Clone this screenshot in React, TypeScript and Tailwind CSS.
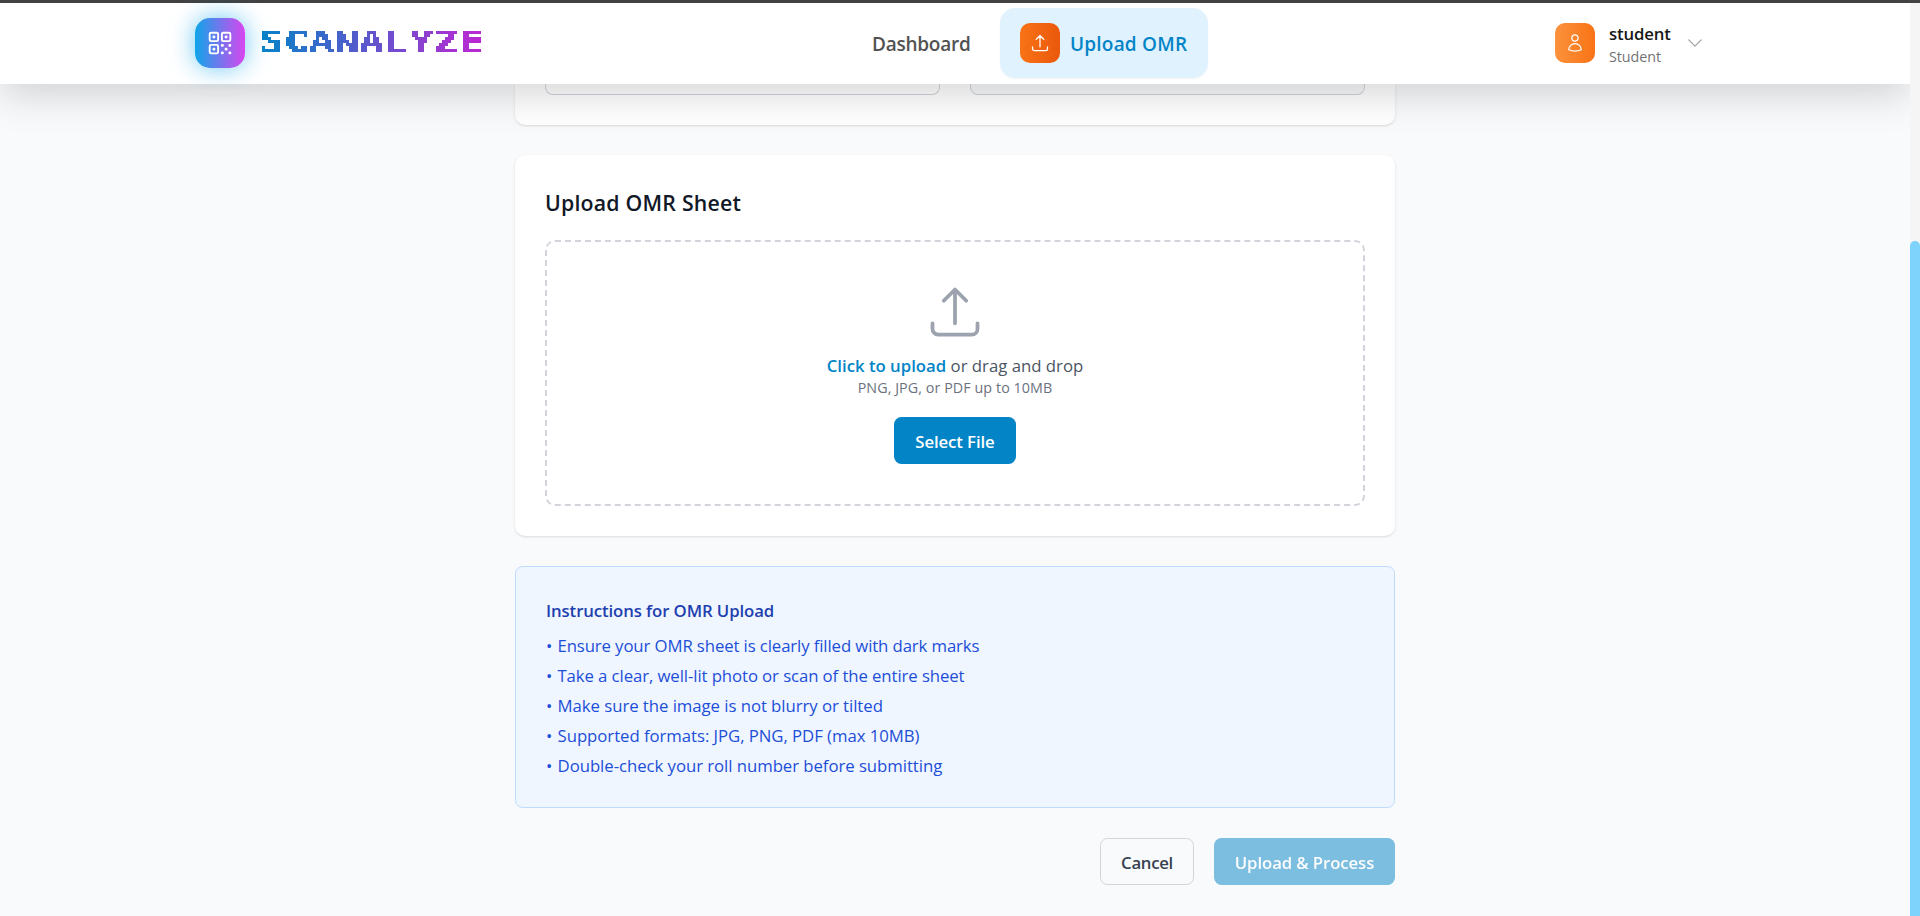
import React from 'react';
import {
  HiOutlineArrowUpTray,
  HiOutlineChevronDown,
  HiOutlineQrCode,
  HiOutlineUser,
} from 'react-icons/hi2';

const instructions = [
  { text: 'Ensure your OMR sheet is clearly filled with dark marks', tracking: 'tracking-[-0.11px]' },
  { text: 'Take a clear, well-lit photo or scan of the entire sheet', tracking: 'tracking-[-0.09px]' },
  { text: 'Make sure the image is not blurry or tilted', tracking: 'tracking-[-0.05px]' },
  { text: 'Supported formats: JPG, PNG, PDF (max 10MB)', tracking: 'tracking-[-0.05px]' },
  { text: 'Double-check your roll number before submitting', tracking: 'tracking-[-0.05px]' },
];

/* Mosaic filter that gives the brand name its 8-bit look. */
function PixelFilter() {
  return (
    <svg width="0" height="0" className="absolute" aria-hidden="true">
      <filter id="pixelate" x="0" y="0" width="100%" height="100%" colorInterpolationFilters="sRGB">
        <feFlood x="1" y="1" width="1" height="1" />
        <feComposite x="0" y="0" width="3" height="3" />
        <feTile result="grid" />
        <feComposite in="SourceGraphic" in2="grid" operator="in" />
        <feComponentTransfer>
          <feFuncA type="discrete" tableValues="0 1 1" />
        </feComponentTransfer>
        <feMorphology operator="dilate" radius="1" />
      </filter>
    </svg>
  );
}

function Header() {
  return (
    <header className="relative z-10 flex h-[84px] shrink-0 border-t-[3px] border-[#454545] pr-[10px]">
      <div className="flex w-full items-center bg-white pb-px pl-[195px] shadow-[0_10px_40px_rgba(0,0,0,0.17)]">
        <div className="flex w-[678px] items-center gap-[14px]">
          <div className="flex size-[50px] items-center justify-center rounded-[15px] bg-[linear-gradient(to_right,#0ea5e9,#d946ef)] shadow-[0_0_25px_rgba(14,165,233,0.6)]">
            <HiOutlineQrCode className="size-[30px] text-white" />
          </div>
          <div className="mb-[3px] w-[240px] [filter:url(#pixelate)]">
            <span className="block w-[166px] origin-left scale-x-[1.36] bg-[linear-gradient(to_right,#0284c7,#c026d3)] bg-clip-text font-['DejaVu_Sans_Mono',monospace] text-[30.5px] leading-[40px] font-bold text-transparent">
              SCANALYZE
            </span>
          </div>
        </div>
        <nav className="flex w-[682px] items-center">
          <a className="-ml-px w-[128px] pt-[2px] text-[19px] font-semibold tracking-[-0.25px] text-[#525252]">Dashboard</a>
          <a className="flex h-[70px] w-[208px] items-center gap-[10px] rounded-[15px] bg-[#e0f2fe] pl-5 shadow-[0_1px_2px_rgba(0,0,0,0.05)]">
            <span className="flex size-10 items-center justify-center rounded-[10px] bg-[linear-gradient(to_right,#f97316,#ea580c)]">
              <HiOutlineArrowUpTray className="size-5 text-white" />
            </span>
            <span className="pt-[2px] text-[19px] font-semibold tracking-[0.2px] whitespace-nowrap text-[#0284c7]">
              Upload OMR
            </span>
          </a>
        </nav>
        <div className="flex items-center">
          <span className="flex size-10 items-center justify-center rounded-[10px] bg-[linear-gradient(to_right,#fb923c,#f97316)]">
            <HiOutlineUser className="size-5 text-white" />
          </span>
          <div className="ml-[14px] w-[75px] pt-[4px]">
            <p className="text-[16.75px] leading-[22px] font-semibold tracking-[-0.15px] text-[#171717]">student</p>
            <p className="text-[14.3px] leading-[23px] tracking-[-0.05px] text-[#737373]">Student</p>
          </div>
          <HiOutlineChevronDown className="ml-[1px] size-5 shrink-0 text-[#a3a3a3]" />
        </div>
      </div>
    </header>
  );
}

export default function App() {
  return (
    <div className="relative h-[916px] w-[1920px] overflow-hidden bg-[#f9fafb] font-['Open_Sans',sans-serif]">
      <PixelFilter />
      <Header />
      <main className="ml-[515px] flex w-[880px] flex-col gap-[30px]">
        <section className="grid h-[41px] grid-cols-2 gap-[30px] rounded-b-[10px] bg-white px-[30px] shadow-[0_1px_3px_rgba(0,0,0,0.1),0_1px_2px_-1px_rgba(0,0,0,0.1)]">
          <div className="h-[11px] rounded-b-[8px] border border-t-0 border-[#d1d5db]" />
          <div className="h-[11px] rounded-b-[8px] border border-t-0 border-[#d1d5db] bg-[#f9fafb]" />
        </section>

        <section className="h-[381px] rounded-[10px] bg-white p-[30px] shadow-[0_1px_3px_rgba(0,0,0,0.1),0_1px_2px_-1px_rgba(0,0,0,0.1)]">
          <h2 className="mb-5 text-[21.3px] leading-[35px] font-semibold tracking-[0.2px] text-[#111827]">
            Upload OMR Sheet
          </h2>
          <div className="flex h-[266px] flex-col items-center rounded-[10px] border-2 border-dashed border-[#d1d5db] pt-10">
            <HiOutlineArrowUpTray className="size-[60px] text-[#9ca3af]" />
            <p className="mt-[11px] text-[16.75px] leading-[25px] text-[#4b5563]">
              <span className="font-semibold text-[#0284c7]">Click to upload</span> or drag and drop
            </p>
            <p className="text-[14.3px] leading-[20px] tracking-[0.07px] text-[#6b7280]">PNG, JPG, or PDF up to 10MB</p>
            <button className="mt-[19px] h-[47px] w-[122px] rounded-[7.5px] bg-[#0284c7] pt-[2px] text-[16.75px] font-semibold tracking-[-0.1px] text-white">
              Select File
            </button>
          </div>
        </section>

        <section className="h-[242px] rounded-[7.5px] border border-[#bfdbfe] bg-[#eff6ff] px-[30px] pt-[31px]">
          <h3 className="mb-[10px] text-[16.75px] leading-[25px] font-semibold tracking-[-0.1px] text-[#1e40af]">
            Instructions for OMR Upload
          </h3>
          <ul className="flex flex-col gap-[5px] text-[16.75px] leading-[25px] text-[#1d4ed8]">
            {instructions.map((item) => (
              <li key={item.text} className={item.tracking}>
                <span className="mr-[1px]">•</span> {item.text}
              </li>
            ))}
          </ul>
        </section>

        <div className="flex justify-end gap-5">
          <button className="h-[47px] w-[94px] rounded-[7.5px] border border-[#d1d5db] pt-[2px] text-[16.75px] font-semibold tracking-[-0.3px] text-[#374151]">
            Cancel
          </button>
          <button className="h-[47px] w-[181px] rounded-[7.5px] bg-[#0284c7] pt-[2px] text-[16.75px] font-semibold tracking-[-0.1px] text-white opacity-50">
            Upload &amp; Process
          </button>
        </div>
      </main>

      <div className="absolute top-[3px] right-0 z-20 h-[913px] w-[10px] bg-[#f5f5f5] pt-[238px]">
        <div className="h-[690px] rounded-t-full bg-[#7dd3fc]" />
      </div>
    </div>
  );
}
